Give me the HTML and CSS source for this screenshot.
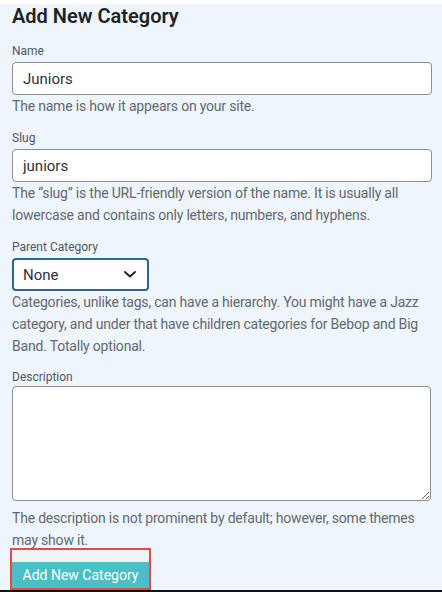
FILE: index.html
```html
<!DOCTYPE html>
<html lang="en">
<head>
<meta charset="utf-8">
<title>Add New Category</title>
<link rel="stylesheet" href="styles.css">
</head>
<body>
<div class="page">
  <h2 class="title">Add New Category</h2>
  <div class="field">
    <label class="label" for="tag-name">Name</label>
    <input class="input" id="tag-name" type="text" value="Juniors">
    <p class="help">The name is how it appears on your site.</p>
  </div>
  <div class="field">
    <label class="label" for="tag-slug">Slug</label>
    <input class="input" id="tag-slug" type="text" value="juniors">
    <p class="help">The “slug” is the URL-friendly version of the name. It is usually all lowercase and contains only letters, numbers, and hyphens.</p>
  </div>
  <div class="field field-parent">
    <label class="label" for="parent">Parent Category</label>
    <div class="select">
      <span class="select-value">None</span>
      <svg class="chevron" width="14" height="9" viewBox="0 0 14 9"><polyline points="2,2 7,6.5 12,2" fill="none" stroke="#1d2327" stroke-width="1.9" stroke-linecap="round" stroke-linejoin="round"/></svg>
    </div>
    <p class="help">Categories, unlike tags, can have a hierarchy. You might have a Jazz category, and under that have children categories for Bebop and Big Band. Totally optional.</p>
  </div>
  <div class="field field-desc">
    <label class="label" for="desc">Description</label>
    <textarea class="textarea" id="desc"></textarea>
    <p class="help">The description is not prominent by default; however, some themes may show it.</p>
  </div>
  <div class="submit">
    <div class="submit-strip"></div>
    <button class="button" type="button">Add New Category</button>
  </div>
</div>
<div class="bottom-bar"></div>
</body>
</html>
```
FILE: styles.css
```css
* { box-sizing: border-box; }
html, body { margin: 0; padding: 0; }
body {
  background: #eef5fc;
  border-top: 4px solid #ffffff;
  font-family: "Roboto", "Liberation Sans", sans-serif;
  width: 442px;
  height: 592px;
  overflow: hidden;
  display: flex;
  flex-direction: column;
}
.page {
  flex: 1;
  padding: 0 10px 0 12px;
}
.title {
  margin: 0 0 16px;
  font-size: 20px;
  line-height: 24px;
  font-weight: 600;
  color: #1d2327;
}
.field { margin-bottom: 14px; }
.field-parent { margin-bottom: 13px; }
.label {
  display: block;
  font-size: 12px;
  line-height: 14px;
  color: #50575e;
  margin-bottom: 4px;
}
.field-desc .label { margin-bottom: 2px; }
.input {
  display: block;
  width: 420px;
  height: 33px;
  border: 1px solid #8c8f94;
  border-radius: 4px;
  background: #fff;
  font-family: inherit;
  font-size: 15px;
  color: #2c3338;
  padding: 0 10px;
  margin: 0;
}
.help {
  margin: 0;
  font-size: 14px;
  line-height: 22px;
  color: #646970;
  letter-spacing: -0.2px;
}
.select {
  width: 137px;
  height: 33px;
  border: 2px solid #2b6496;
  border-radius: 4px;
  background: #fff;
  display: flex;
  align-items: center;
  justify-content: space-between;
  padding: 0 10px 0 9px;
}
.select-value { font-size: 15px; color: #2c3338; }
.textarea {
  display: block;
  width: 419px;
  height: 115px;
  border: 1px solid #8c8f94;
  border-radius: 4px;
  background: #fff;
  margin: 0 0 6px;
  font-family: inherit;
}
.submit {
  width: 141px;
  margin-top: -17px;
  margin-left: -2px;
  border: 2px solid #e14b4b;
  display: flex;
  flex-direction: column;
}
.submit-strip { height: 12px; background: #f1f3f4; }
.button {
  height: 26px;
  border: 0;
  margin: 0;
  background: #4bbfc6;
  color: #fff;
  font-family: inherit;
  font-size: 14px;
  padding: 0;
  text-align: center;
}
.bottom-bar { height: 2px; background: #111; flex: none; }
```
